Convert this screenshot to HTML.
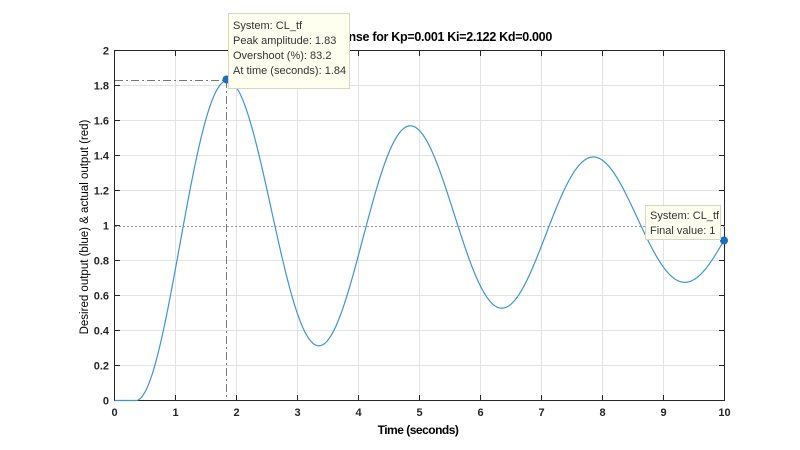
<!DOCTYPE html>
<html><head><meta charset="utf-8"><style>
html,body{margin:0;padding:0;background:#fff;width:800px;height:450px;overflow:hidden}
svg text{font-family:"Liberation Sans",sans-serif}
</style></head><body>
<svg id="s" width="800" height="450" xmlns="http://www.w3.org/2000/svg">
<g id="grid" stroke="#e3e3e3" stroke-width="1"></g>
<rect x="114.5" y="50.5" width="610" height="350" fill="none" stroke="#262626" stroke-width="1"/>
<g id="ticks" stroke="#262626" stroke-width="1"></g>
<line x1="115" y1="226.5" x2="725" y2="226.5" stroke="#999" stroke-dasharray="2,2"/>
<polyline points="115,80.5 226.5,80.5" fill="none" stroke="#777" stroke-dasharray="8,3,2,3"/>
<polyline points="226.5,80 226.5,400" fill="none" stroke="#777" stroke-dasharray="8,3,2,3"/>
<path id="curve" fill="none" stroke="#3d95d6" stroke-width="1.2"/>
<circle cx="226.5" cy="79.5" r="4" fill="#1f6fbf"/>
<circle cx="724" cy="240.5" r="4" fill="#1f6fbf"/>
<g id="labels" font-size="11" font-weight="bold" fill="#262626"></g>
<text x="552" y="41" text-anchor="end" font-size="12.5" font-weight="bold" fill="#000" letter-spacing="-0.3">Step Response for Kp=0.001 Ki=2.122 Kd=0.000</text>
<text x="418" y="434" text-anchor="middle" font-size="12" font-weight="bold" fill="#000" letter-spacing="-0.5">Time (seconds)</text>
<text transform="translate(88,227) rotate(-90)" text-anchor="middle" font-size="11.5" fill="#000">Desired output (blue) &amp; actual output (red)</text>
<rect x="228.5" y="13.5" width="121" height="75" fill="#fffff0" stroke="#d8d8c0"/>
<g font-size="11" fill="#333">
<text x="233" y="29">System: CL_tf</text>
<text x="233" y="44">Peak amplitude: 1.83</text>
<text x="233" y="59">Overshoot (%): 83.2</text>
<text x="233" y="74">At time (seconds): 1.84</text>
</g>
<rect x="645.5" y="205.5" width="75" height="34" fill="#fffff0" stroke="#d8d8c0"/>
<g font-size="11" fill="#333">
<text x="650" y="219">System: CL_tf</text>
<text x="650" y="234">Final value: 1</text>
</g>
</svg>
<script>
var ns="http://www.w3.org/2000/svg";
function X(t){return 114.5+t*61}
function Y(v){return 400.5-v*175}
var g=document.getElementById('grid'),tk=document.getElementById('ticks'),lb=document.getElementById('labels');
function el(p,n,a){var e=document.createElementNS(ns,n);for(var k in a)e.setAttribute(k,a[k]);p.appendChild(e);return e}
for(var i=0;i<=10;i++){var x=X(i);
 if(i>0&&i<10)el(g,'line',{x1:x,y1:51,x2:x,y2:400});
 el(tk,'line',{x1:x,y1:400,x2:x,y2:395});el(tk,'line',{x1:x,y1:51,x2:x,y2:56});
 var t=el(lb,'text',{x:x,y:416,'text-anchor':'middle'});t.textContent=i;}
for(var j=0;j<=10;j++){var v=j*0.2,y=Y(v);
 if(j>0&&j<10&&j!=5)el(g,'line',{x1:115,y1:y,x2:724,y2:y});
 el(tk,'line',{x1:115,y1:y,x2:120,y2:y});el(tk,'line',{x1:724,y1:y,x2:719,y2:y});
 var s=(j==0?'0':(j==10?'2':(j==5?'1':v.toFixed(1))));
 var t=el(lb,'text',{x:109,y:y+4,'text-anchor':'end'});t.textContent=s;}
var w=2*Math.PI/3,sg=0.125,td=0.35,d='';
for(var k=0;k<=1000;k++){var tt=k/100,yv=0;
 if(tt>td){var u=tt-td;yv=1-Math.exp(-sg*u)*(Math.cos(w*u)+sg/w*Math.sin(w*u));}
 d+=(k?'L':'M')+X(tt).toFixed(2)+','+Y(yv).toFixed(2);}
document.getElementById('curve').setAttribute('d',d);
</script>
</body></html>
